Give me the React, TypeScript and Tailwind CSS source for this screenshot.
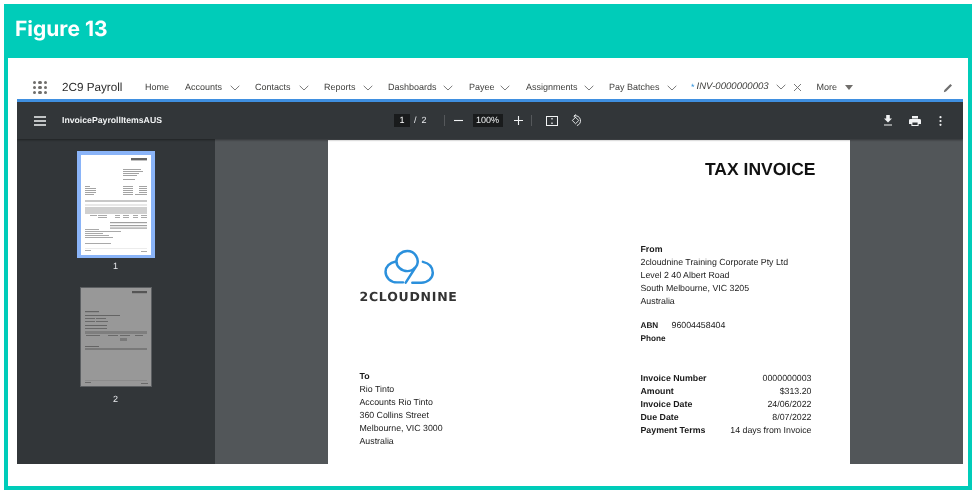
import React from "react";

const Chev = () => (
  <svg width="10" height="6" viewBox="0 0 10 6" fill="none" stroke="#6b6b6b" strokeWidth="0.9" className="shrink-0">
    <path d="M0.7 0.8 5 5 9.3 0.8" />
  </svg>
);

const NavItem = ({ label, w, next, chevron = true }: { label: string; w: number; next: number; chevron?: boolean }) => (
  <div className="flex items-center" style={{ marginRight: next }}>
    <span className="text-[9px] text-[#3e3e3c] whitespace-nowrap" style={{ width: w }}>{label}</span>
    {chevron && <span className="flex ml-[8px]"><Chev /></span>}
  </div>
);

const Row = ({ k, v }: { k: string; v: string }) => (
  <div className="flex justify-between h-[13px] leading-[13px]">
    <span className="font-bold">{k}</span>
    <span>{v}</span>
  </div>
);

const Thumb1 = () => (
  <svg width="70" height="100" viewBox="0 0 70 100" className="bg-white block">
    <g className="blur-[0.6px]">
      <rect x="50" y="3" width="16" height="2.4" fill="#666" />
      <g fill="#999">
        <rect x="42" y="14" width="18" height="0.9" /><rect x="42" y="16" width="20" height="0.9" /><rect x="42" y="18" width="16" height="0.9" /><rect x="42" y="20" width="14" height="0.9" />
        <rect x="42" y="24" width="12" height="0.9" />
        <rect x="42" y="31" width="10" height="0.9" /><rect x="58" y="31" width="8" height="0.9" /><rect x="42" y="33" width="10" height="0.9" /><rect x="58" y="33" width="8" height="0.9" /><rect x="42" y="35" width="10" height="0.9" /><rect x="58" y="35" width="8" height="0.9" /><rect x="42" y="37" width="10" height="0.9" /><rect x="58" y="37" width="8" height="0.9" /><rect x="42" y="39" width="10" height="0.9" /><rect x="54" y="39" width="12" height="0.9" />
        <rect x="4" y="31" width="5" height="0.9" /><rect x="4" y="33" width="11" height="0.9" /><rect x="4" y="35" width="11" height="0.9" /><rect x="4" y="37" width="11" height="0.9" /><rect x="4" y="39" width="9" height="0.9" />
      </g>
      <rect x="4" y="45" width="62" height="2" fill="#c8c8c8" />
      <rect x="4" y="49" width="62" height="2" fill="#e8e8e8" />
      <rect x="4" y="52" width="62" height="7" fill="#d0d0d0" />
      <g fill="#a0a0a0">
        <rect x="9" y="60" width="7" height="0.9" /><rect x="17" y="60" width="9" height="0.9" /><rect x="34" y="60" width="5" height="0.9" /><rect x="42" y="60" width="6" height="0.9" /><rect x="52" y="60" width="5" height="0.9" /><rect x="60" y="60" width="6" height="0.9" />
        <rect x="17" y="62" width="9" height="0.9" /><rect x="34" y="62" width="5" height="0.9" /><rect x="42" y="62" width="6" height="0.9" /><rect x="52" y="62" width="5" height="0.9" /><rect x="60" y="62" width="6" height="0.9" />
        <rect x="29" y="67" width="37" height="1.2" /><rect x="29" y="70" width="37" height="1.2" /><rect x="29" y="72.5" width="37" height="1.2" />
        <rect x="4" y="74" width="14" height="0.9" /><rect x="4" y="76" width="36" height="0.9" /><rect x="4" y="78" width="18" height="0.9" /><rect x="4" y="80" width="24" height="0.9" /><rect x="4" y="82" width="28" height="0.9" /><rect x="4" y="88" width="26" height="0.9" />
        <rect x="4" y="95" width="6" height="0.9" /><rect x="60" y="96" width="6" height="0.9" />
      </g>
      <rect x="4" y="93" width="62" height="0.5" fill="#d8d8d8" />
    </g>
  </svg>
);

const Thumb2 = () => (
  <svg width="70" height="98" viewBox="0 0 70 98" className="block bg-[#989898]">
    <g className="blur-[0.6px]">
      <rect x="51" y="3" width="15" height="2.2" fill="#555" />
      <g fill="#646464">
        <rect x="4" y="23" width="14" height="1.2" /><rect x="4" y="27" width="35" height="1" /><rect x="4" y="30" width="10" height="0.9" /><rect x="15" y="30" width="10" height="0.9" /><rect x="4" y="33" width="10" height="0.9" /><rect x="15" y="33" width="12" height="0.9" />
        <rect x="4" y="37" width="22" height="1" /><rect x="4" y="40" width="22" height="0.9" />
        <rect x="4" y="43" width="62" height="3" opacity="0.5" /><rect x="5" y="47" width="14" height="0.9" /><rect x="27" y="47" width="10" height="0.9" /><rect x="39" y="47" width="10" height="0.9" /><rect x="54" y="47" width="8" height="0.9" /><rect x="39" y="50" width="7" height="3" opacity="0.6" />
        <rect x="4" y="58" width="14" height="1" /><rect x="4" y="60" width="62" height="2" opacity="0.6" />
        <rect x="4" y="94" width="6" height="0.9" /><rect x="60" y="95" width="7" height="0.9" />
      </g>
      <rect x="4" y="92" width="62" height="0.5" fill="#808080" />
    </g>
  </svg>
);

const Logo = () => (
  <svg width="55" height="38" viewBox="125 55 165 115" fill="none" stroke="#2b90dc" strokeWidth="7.5" strokeLinecap="round">
    <path d="M166 96C147 99 135 112 135 127C135 145 150 159 170 159H188" />
    <path d="M248 97C266 101 278 113 278 130C278 147 262 160 243 160H216" />
    <path d="M196 160L230 107C238 88 224 64 201 64C183 64 168 78 168 95C168 112 184 125 201 125C210 125 219 120 224 114" />
  </svg>
);

export default function App() {
  return (
    <div className="w-[976px] h-[494px] bg-white p-1 blur-[0.35px] [text-rendering:geometricPrecision]" style={{ fontFamily: '"Liberation Sans", Arial, sans-serif' }}>
      <div className="h-full w-full bg-[#00ccb9] flex flex-col">
        <div className="h-[54px] pl-[11px] pt-[11px] shrink-0">
          <h1 className="text-white text-[21px] leading-[29px] font-bold" style={{ fontFamily: 'Inter, sans-serif' }}>Figure 13</h1>
        </div>
        <div className="mx-1 mb-1 flex-1 bg-white pl-[9px] pr-[5px] pt-[18px] flex flex-col min-h-0">
          {/* App nav */}
          <div className="h-[23px] shrink-0 flex items-center pl-[16px] pr-[10px]">
            <div className="grid grid-cols-3 gap-[2px] w-[14px] shrink-0 mr-[15px]">
              {Array.from({ length: 9 }).map((_, i) => (
                <span key={i} className="w-[3.3px] h-[3.3px] rounded-full bg-[#706e6b]" />
              ))}
            </div>
            <span className="text-[11.7px] text-[#2b2b2b] w-[60px] mr-[23px] whitespace-nowrap">2C9 Payroll</span>
            <NavItem label="Home" w={24} next={16} chevron={false} />
            <NavItem label="Accounts" w={37} next={15} />
            <NavItem label="Contacts" w={36} next={15} />
            <NavItem label="Reports" w={31} next={15} />
            <NavItem label="Dashboards" w={47} next={16} />
            <NavItem label="Payee" w={23} next={16} />
            <NavItem label="Assignments" w={50} next={15} />
            <NavItem label="Pay Batches" w={50} next={14} />
            <div className="flex items-center mr-[15px]">
              <span className="text-[#2b90dc] text-[9px] mr-[2px]">*</span>
              <span className="text-[9.6px] italic text-[#3e3e3c] whitespace-nowrap w-[72px]">INV-0000000003</span>
              <span className="flex ml-[7px]"><Chev /></span>
              <svg width="9" height="9" viewBox="0 0 9 9" stroke="#6b6b6b" strokeWidth="0.9" className="ml-[7px]"><path d="M1 1l7 7M8 1 1 8" /></svg>
            </div>
            <span className="text-[9px] text-[#3e3e3c] w-[20px]">More</span>
            <svg width="8" height="5" viewBox="0 0 8 5" className="ml-[8px]"><path d="M0 0h8L4 5z" fill="#706e6b" /></svg>
            <svg width="10" height="10" viewBox="0 0 10 10" className="ml-auto" fill="#6f6f6f"><path d="M7.4 1 9 2.6 3 8.6 0.8 9.2 1.4 7z" /></svg>
          </div>
          {/* PDF viewer */}
          <div className="border-t-[3px] border-[#3f8fe0] flex-1 flex flex-col min-h-0 mb-[22px] overflow-hidden">
            <div className="h-[37px] shrink-0 bg-[#323639] flex items-center text-white shadow-[0_1px_2px_rgba(0,0,0,0.4)] relative">
              <svg width="12" height="10" viewBox="0 0 12 10" stroke="#f1f3f4" strokeWidth="1.3" className="ml-[17px] mr-[16px]"><path d="M0 1h12M0 5h12M0 9h12" /></svg>
              <span className="text-[8.7px] font-bold text-[#f1f3f4] w-[332px] whitespace-nowrap">InvoicePayrollItemsAUS</span>
              <span className="w-[16px] h-[13px] bg-[#191b1c] flex items-center justify-center text-[9px]">1</span>
              <span className="text-[9px] ml-[4px] text-[#e8eaed]">/</span>
              <span className="text-[9px] ml-[5px] text-[#e8eaed]">2</span>
              <span className="w-px h-[11px] bg-[#55585b] ml-[17px]" />
              <svg width="9" height="9" viewBox="0 0 9 9" stroke="#f1f3f4" strokeWidth="1.1" className="ml-[9px]"><path d="M0 4.5h9" /></svg>
              <span className="w-[30px] h-[13px] bg-[#191b1c] flex items-center justify-center text-[9px] ml-[10px] text-[#f1f3f4]">100%</span>
              <svg width="9" height="9" viewBox="0 0 9 9" stroke="#f1f3f4" strokeWidth="1.1" className="ml-[11px]"><path d="M0 4.5h9M4.5 0v9" /></svg>
              <span className="w-px h-[11px] bg-[#55585b] ml-[8px]" />
              <svg width="12" height="10" viewBox="0 0 12 10" fill="none" stroke="#f1f3f4" strokeWidth="1" className="ml-[14px]"><rect x="0.5" y="0.5" width="11" height="9" /><path d="M6 2v1.4M6 6.6V8" strokeWidth="1.3" /></svg>
              <svg width="12" height="13" viewBox="0 0 13 13" fill="none" stroke="#f1f3f4" strokeWidth="1" className="ml-[12px]"><path d="M6 3 9.5 6.5 6 10 2.5 6.5Z" /><path d="M4.5 1.6A5.2 5.2 0 1 1 7.5 12" /><path d="M6.6 0 4.2 1.7 6.2 3.8" /></svg>
              <svg width="10" height="11" viewBox="0 0 10 11" fill="#f1f3f4" className="ml-auto"><path d="M3.2 0h3.6v3.6H9L5 7.6 1 3.6h2.2zM1 9.4h8v1.2H1z" /></svg>
              <svg width="12" height="10" viewBox="0 0 12 10" fill="#f1f3f4" className="ml-[16px]"><path d="M3 0h6v2.4H3zM1.4 3h9.2A1.4 1.4 0 0 1 12 4.4V8H9.6v2H2.4V8H0V4.4A1.4 1.4 0 0 1 1.4 3zM3.4 6.4V9h5.2V6.4z" /></svg>
              <svg width="3" height="10" viewBox="0 0 3 10" fill="#f1f3f4" className="ml-[18px] mr-[21px]"><circle cx="1.5" cy="1.2" r="1.1" /><circle cx="1.5" cy="5" r="1.1" /><circle cx="1.5" cy="8.8" r="1.1" /></svg>
            </div>
            <div className="flex-1 flex min-h-0 overflow-hidden">
              <aside className="w-[198px] shrink-0 bg-[#323639] flex flex-col items-center pt-[12px]">
                <div className="w-[78px] h-[107px] bg-[#8ab4f8] flex items-center justify-center ml-[-1px]">
                  <Thumb1 />
                </div>
                <span className="text-[9px] text-[#e8eaed] mt-[2px] leading-[12px] ml-[-1px]">1</span>
                <div className="mt-[15px] ml-[-1px] border border-[#5c5f62]">
                  <Thumb2 />
                </div>
                <span className="text-[9px] text-[#e8eaed] mt-[6px] leading-[12px] ml-[-1px]">2</span>
              </aside>
              <main className="flex-1 bg-[#525659] flex justify-center pt-px pr-[1px] min-w-0">
                <div className="w-[522px] bg-white text-[8.8px] text-[#1a1a1a] pl-[32px] pr-[34px] flex flex-col">
                  <div className="text-right font-bold text-[17.5px] leading-[22px] text-[#111] mt-[18px]">TAX INVOICE</div>
                  <div className="flex justify-between mt-[63px]">
                    <div className="w-[110px] flex flex-col">
                      <div className="mt-[5px] ml-[22px] h-[38px]"><Logo /></div>
                      <div className="mt-[3px] text-[12.5px] tracking-[0.75px] leading-[16px] font-bold text-[#333] whitespace-nowrap" style={{ fontFamily: '"DejaVu Sans", sans-serif' }}>2CLOUDNINE</div>
                      <div className="mt-[65px] leading-[13px]">
                        <div className="font-bold h-[13px]">To</div>
                        <div>Rio Tinto</div>
                        <div>Accounts Rio Tinto</div>
                        <div>360 Collins Street</div>
                        <div>Melbourne, VIC 3000</div>
                        <div>Australia</div>
                      </div>
                    </div>
                    <div className="w-[171px] flex flex-col leading-[13px] mr-[4px]">
                      <div className="font-bold">From</div>
                      <div>2cloudnine Training Corporate Pty Ltd</div>
                      <div>Level 2 40 Albert Road</div>
                      <div>South Melbourne, VIC 3205</div>
                      <div>Australia</div>
                      <div className="flex mt-[11px]"><span className="font-bold w-[31px] text-[8.2px]">ABN</span><span>96004458404</span></div>
                      <div className="font-bold text-[8.2px]">Phone</div>
                      <div className="mt-[27px]">
                        <Row k="Invoice Number" v="0000000003" />
                        <Row k="Amount" v="$313.20" />
                        <Row k="Invoice Date" v="24/06/2022" />
                        <Row k="Due Date" v="8/07/2022" />
                        <Row k="Payment Terms" v="14 days from Invoice" />
                      </div>
                    </div>
                  </div>
                </div>
              </main>
            </div>
          </div>
        </div>
      </div>
    </div>
  );
}
